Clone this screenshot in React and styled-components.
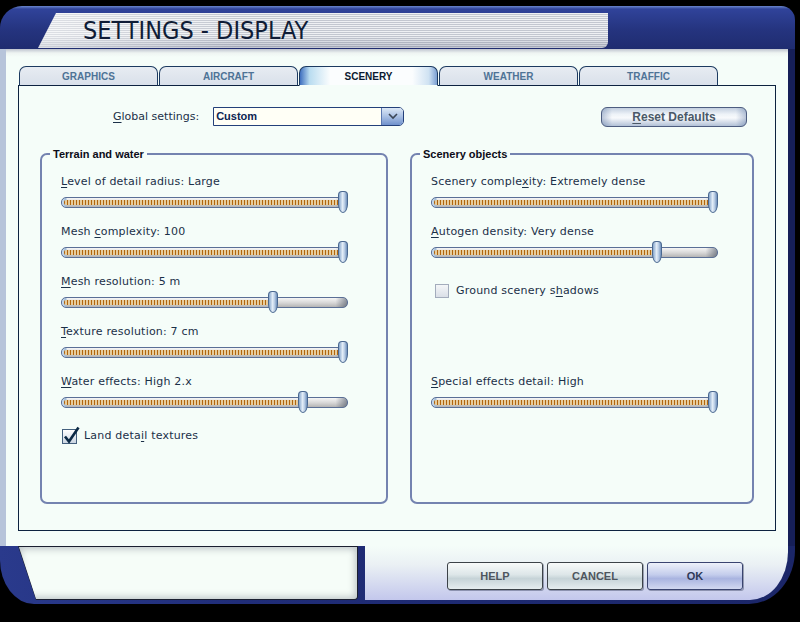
import React from "react";
import styled, { createGlobalStyle } from "styled-components";

const GlobalStyle = createGlobalStyle`
  html, body {
    margin: 0;
    padding: 0;
    background: #000;
  }
  body {
    font-family: "DejaVu Sans", Verdana, sans-serif;
  }
`;

const tabs = ["GRAPHICS", "AIRCRAFT", "SCENERY", "WEATHER", "TRAFFIC"];

const terrain = [
  { text: "Level of detail radius: Large", at: 0, value: 1 },
  { text: "Mesh complexity: 100", at: 5, value: 1 },
  { text: "Mesh resolution: 5 m", at: 0, value: 0.747 },
  { text: "Texture resolution: 7 cm", at: 0, value: 1 },
  { text: "Water effects: High 2.x", at: 0, value: 0.856 },
];

const SLIDER_W = 287;
const THUMB_W = 10;

function Accel({ text, at }) {
  return (
    <>
      {text.slice(0, at)}
      <U>{text[at]}</U>
      {text.slice(at + 1)}
    </>
  );
}

function Slider({ value }) {
  const left = Math.round(value * (SLIDER_W - THUMB_W));
  return (
    <SliderBox>
      <Track>
        <Fill style={{ width: left + 3 }} />
      </Track>
      <Thumb style={{ left }} />
    </SliderBox>
  );
}

function SliderRow({ text, at, value }) {
  return (
    <Row>
      <Label>
        <Accel text={text} at={at} />
      </Label>
      <Slider value={value} />
    </Row>
  );
}

function Check({ checked, text, at, $m }) {
  return (
    <CheckRow $m={$m}>
      <CheckBox $checked={checked} $size={checked ? 15 : 14}>
        {checked && (
          <CheckMark width="18" height="18" viewBox="0 0 18 18">
            <path d="M3 7.5 L7 12.5 L16.5 -1.5" fill="none" stroke="#0b2945" strokeWidth="2.6" />
          </CheckMark>
        )}
      </CheckBox>
      <Label>
        <Accel text={text} at={at} />
      </Label>
    </CheckRow>
  );
}

export default function App() {
  return (
    <Page>
      <GlobalStyle />
      <Window>
        <TitleBar>
          <Banner>
            <Title>SETTINGS - DISPLAY</Title>
          </Banner>
        </TitleBar>

        <Body>
          <Tabs>
            {tabs.map((t) => (
              <Tab key={t} $active={t === "SCENERY"}>
                {t}
              </Tab>
            ))}
          </Tabs>

          <Panel>
            <TopRow>
              <SmallLabel>
                <Accel text="Global settings:" at={0} />
              </SmallLabel>
              <Select>
                <SelectValue>Custom</SelectValue>
                <SelectButton>
                  <svg width="10" height="7" viewBox="0 0 10 7">
                    <polyline points="1,1 5,5 9,1" fill="none" stroke="#3b4656" strokeWidth="1.6" />
                  </svg>
                </SelectButton>
              </Select>
              <ResetButton>
                <Accel text="Reset Defaults" at={0} />
              </ResetButton>
            </TopRow>

            <Groups>
              <Group $w="348px">
                <Legend>Terrain and water</Legend>
                <Rows>
                  {terrain.map((r) => (
                    <SliderRow key={r.text} {...r} />
                  ))}
                  <Check checked text="Land detail textures" at={9} $m="3px 0 0 1px" />
                </Rows>
              </Group>

              <Group>
                <Legend>Scenery objects</Legend>
                <Rows>
                  <SliderRow text="Scenery complexity: Extremely dense" at={14} value={1} />
                  <SliderRow text="Autogen density: Very dense" at={0} value={0.798} />
                  <Check text="Ground scenery shadows" at={16} $m="8px 0 74px 4px" />
                  <SliderRow text="Special effects detail: High" at={0} value={1} />
                </Rows>
              </Group>
            </Groups>
          </Panel>
        </Body>

        <Footer>
          <StatusFrame>
            <StatusBox />
          </StatusFrame>
          <ButtonArea>
            <DlgButton>HELP</DlgButton>
            <DlgButton>CANCEL</DlgButton>
            <DlgButton $primary>OK</DlgButton>
          </ButtonArea>
        </Footer>
      </Window>
    </Page>
  );
}

// page + window frame
const Page = styled.div`
  width: 800px;
  height: 622px;
  background: #000;
  overflow: hidden;
  padding-top: 6px;
  box-sizing: border-box;
`;

const Window = styled.div`
  width: 795px;
  display: flex;
  flex-direction: column;
`;

const TitleBar = styled.div`
  height: 43px;
  display: flex;
  align-items: flex-start;
  background: linear-gradient(180deg, #6a86cc 0, #30439a 3px, #25347f 55%, #1f2c70 100%);
  border-radius: 22px 14px 0 0;
`;

const Banner = styled.div`
  margin: 7px 0 0 38px;
  width: 570px;
  height: 35px;
  box-sizing: border-box;
  padding-left: 45px;
  background:
    linear-gradient(90deg, rgba(255, 255, 255, 0.45), rgba(255, 255, 255, 0) 35%),
    linear-gradient(180deg, rgba(0, 0, 0, 0) 65%, rgba(40, 50, 90, 0.22) 100%),
    repeating-linear-gradient(180deg, #eef0f3 0 1px, #c3c7d0 1px 2px);
  clip-path: polygon(18px 0, 100% 0, 100% 100%, 0 100%);
  border-bottom-right-radius: 6px;
`;

const Title = styled.h1`
  margin: 0;
  font: 400 25px/36px "DejaVu Sans Condensed", "DejaVu Sans", sans-serif;
  color: #0f1c36;
`;

// body
const Body = styled.div`
  height: 497px;
  box-sizing: border-box;
  padding: 17px 12px 15px 12px;
  border-left: 6px solid #b7c4da;
  border-right: 7px solid #161f58;
  background: linear-gradient(180deg, #bfc4cf 0, #eef4f2 4px, #f5fdf9 8px);
`;

const Tabs = styled.div`
  position: relative;
  z-index: 1;
  display: flex;
  gap: 1px;
  padding-left: 1px;
  height: 20px;
  margin-bottom: -1px;
`;

const Tab = styled.div`
  width: 139px;
  height: 20px;
  box-sizing: border-box;
  border: 1px solid #1c3a60;
  border-bottom-color: ${(p) => (p.$active ? "#f5fdf9" : "#0d2240")};
  border-radius: 7px 7px 0 0;
  background: ${(p) =>
    p.$active
      ? "linear-gradient(90deg, #3f6fbf 0, #b9dcf0 7%, #fbfdfe 22%, #fbfdfe 82%, #cfe2f2 94%, #7b9fd2 100%)"
      : "linear-gradient(180deg, #e7ecf2, #d9e0ea)"};
  color: ${(p) => (p.$active ? "#0b1a30" : "#4e7396")};
  font: 700 10px/20px "Liberation Sans", Arial, sans-serif;
  text-align: center;
`;

const Panel = styled.div`
  height: 446px;
  box-sizing: border-box;
  display: flex;
  flex-direction: column;
  padding: 20px 21px 26px;
  border: 1px solid #0d2240;
  background: #f5fdf9;
`;

const TopRow = styled.div`
  height: 21px;
  display: flex;
  align-items: center;
  padding: 0 7px 0 73px;
`;

const SmallLabel = styled.span`
  font: 400 11px/14px "DejaVu Sans", Verdana, sans-serif;
  color: #1b3048;
  margin-right: 14px;
`;

const U = styled.span`
  text-decoration: underline;
  text-underline-offset: 2px;
`;

const Select = styled.div`
  width: 191px;
  height: 19px;
  box-sizing: border-box;
  display: flex;
  border: 1px solid #23407a;
  border-radius: 0 5px 5px 0;
  background: #fffff6;
`;

const SelectValue = styled.div`
  flex: 1;
  padding-left: 2px;
  font: 700 11px/17px "Liberation Sans", Arial, sans-serif;
  color: #0c2452;
`;

const SelectButton = styled.div`
  width: 21px;
  display: flex;
  align-items: center;
  justify-content: center;
  border-left: 1px solid #5b78b0;
  border-radius: 0 4px 4px 0;
  background: linear-gradient(180deg, #dce8f6 0, #a9c0e4 50%, #6f91cc 100%);
`;

const ResetButton = styled.button`
  margin-left: auto;
  width: 146px;
  height: 20px;
  padding: 0;
  border: 1px solid #4d5d80;
  border-radius: 6px;
  background:
    linear-gradient(90deg, rgba(70, 100, 150, 0.35), rgba(70, 100, 150, 0) 7%, rgba(70, 100, 150, 0) 93%, rgba(70, 100, 150, 0.35)),
    linear-gradient(180deg, #c3cfe0 0%, #eef3f8 35%, #f8fafc 55%, #b2c1d7 100%);
  font: 700 12px/18px "Liberation Sans", Arial, sans-serif;
  color: #4b5968;
`;

// group boxes
const Groups = styled.div`
  flex: 1;
  display: flex;
  gap: 22px;
  margin-top: 20px;
`;

const Group = styled.fieldset`
  flex: ${(p) => (p.$w ? `0 0 ${p.$w}` : "1")};
  box-sizing: border-box;
  min-width: 0;
  margin: 0;
  padding: 0;
  border: 2px solid #7483b0;
  border-radius: 7px;
`;

const Legend = styled.legend`
  margin-left: 8px;
  padding: 0 3px;
  font: 700 11px/14px "Liberation Sans", Arial, sans-serif;
  color: #0c0c18;
`;

const Rows = styled.div`
  display: flex;
  flex-direction: column;
  padding: 13px 19px 0;
`;

const Row = styled.div`
  height: 50px;
  display: flex;
  flex-direction: column;
`;

const Label = styled.div`
  font: 400 11px/16px "DejaVu Sans", Verdana, sans-serif;
  letter-spacing: 0.2px;
  color: #1b3048;
  white-space: nowrap;
`;

// slider
const SliderBox = styled.div`
  position: relative;
  width: ${SLIDER_W}px;
  height: 22px;
  margin-top: 1px;
  display: flex;
  align-items: center;
`;

const Track = styled.div`
  width: 100%;
  height: 11px;
  box-sizing: border-box;
  padding: 2px;
  border: 1px solid #5a6f96;
  border-radius: 5px;
  background:
    linear-gradient(90deg, #cfe1f2 0, #9fbad8 4px, rgba(0, 0, 0, 0) 5px, rgba(0, 0, 0, 0) 96%, rgba(60, 70, 90, 0.55) 100%),
    linear-gradient(180deg, #f6f6f6 0, #d6d6d6 55%, #b4b4b4 100%);
`;

const Fill = styled.div`
  height: 100%;
  border-radius: 2px;
  background: repeating-linear-gradient(90deg, #b0650e 0 1px, #e6cc9c 1px 3px);
`;

const Thumb = styled.div`
  position: absolute;
  top: 0;
  width: ${THUMB_W}px;
  height: 22px;
  box-sizing: border-box;
  border: 1px solid #4a6890;
  border-radius: 4px 4px 50% 50% / 4px 4px 9px 9px;
  background: linear-gradient(90deg, #86a6cc 0, #e4eef8 45%, #b8cce4 70%, #6f90bc 100%);
`;

// checkboxes
const CheckRow = styled.div`
  height: 18px;
  display: flex;
  align-items: center;
  gap: 7px;
  margin: ${(p) => p.$m || 0};
`;

const CheckBox = styled.span`
  position: relative;
  flex: none;
  width: ${(p) => p.$size}px;
  height: ${(p) => p.$size}px;
  box-sizing: border-box;
  border: 1px solid ${(p) => (p.$checked ? "#44607e" : "#a3acbc")};
  background: ${(p) =>
    p.$checked ? "linear-gradient(180deg, #ffffff, #cbd5e2)" : "linear-gradient(180deg, #f4f6f8, #dadfe7)"};
`;

const CheckMark = styled.svg`
  position: absolute;
  left: -1px;
  top: -1px;
  overflow: visible;
`;

// footer
const Footer = styled.div`
  height: 58px;
  box-sizing: border-box;
  display: flex;
  padding: 0 7px 4px 18px;
  background: linear-gradient(90deg, #2a3a8c 0, #202d78 30%, #1b2668 100%);
  border-radius: 0 0 46px 34px / 0 0 54px 44px;
`;

const StatusFrame = styled.div`
  width: 340px;
  height: 54px;
  box-sizing: border-box;
  padding: 1px;
  background: #1b2030;
  clip-path: polygon(0 0, 100% 0, 100% 100%, 18px 100%);
  border-radius: 0 0 4px 0;
`;

const StatusBox = styled.div`
  height: 100%;
  background: #f6fdf8;
  box-shadow: inset 0 0 7px 2px rgba(120, 128, 140, 0.45);
  clip-path: polygon(0 0, 100% 0, 100% 100%, 17px 100%);
  border-radius: 0 0 3px 0;
`;

const ButtonArea = styled.div`
  flex: 1;
  height: 54px;
  box-sizing: border-box;
  margin-left: 7px;
  padding: 5px 0 0 82px;
  display: flex;
  align-items: center;
  gap: 4px;
  background: linear-gradient(180deg, #f5fdf9 0%, #eaf0f4 35%, #c3c7ec 100%);
  border-radius: 0 0 38px 0 / 0 0 48px 0;
`;

const DlgButton = styled.button`
  width: 96px;
  height: 28px;
  padding: 0;
  border: 1px solid ${(p) => (p.$primary ? "#3a4470" : "#3c4248")};
  border-radius: 3px;
  background: ${(p) =>
    p.$primary
      ? "linear-gradient(180deg, #eef1fa 0%, #c4cdec 45%, #a9b4e0 60%, #d2d8f0 100%)"
      : "linear-gradient(180deg, #f8fafa 0%, #dde6e8 45%, #c6d3d7 60%, #e6edef 100%)"};
  box-shadow: 1px 1px 0 rgba(20, 30, 60, 0.35);
  font: 700 11px/26px "Liberation Sans", Arial, sans-serif;
  color: ${(p) => (p.$primary ? "#2f3a58" : "#4e565e")};
`;
